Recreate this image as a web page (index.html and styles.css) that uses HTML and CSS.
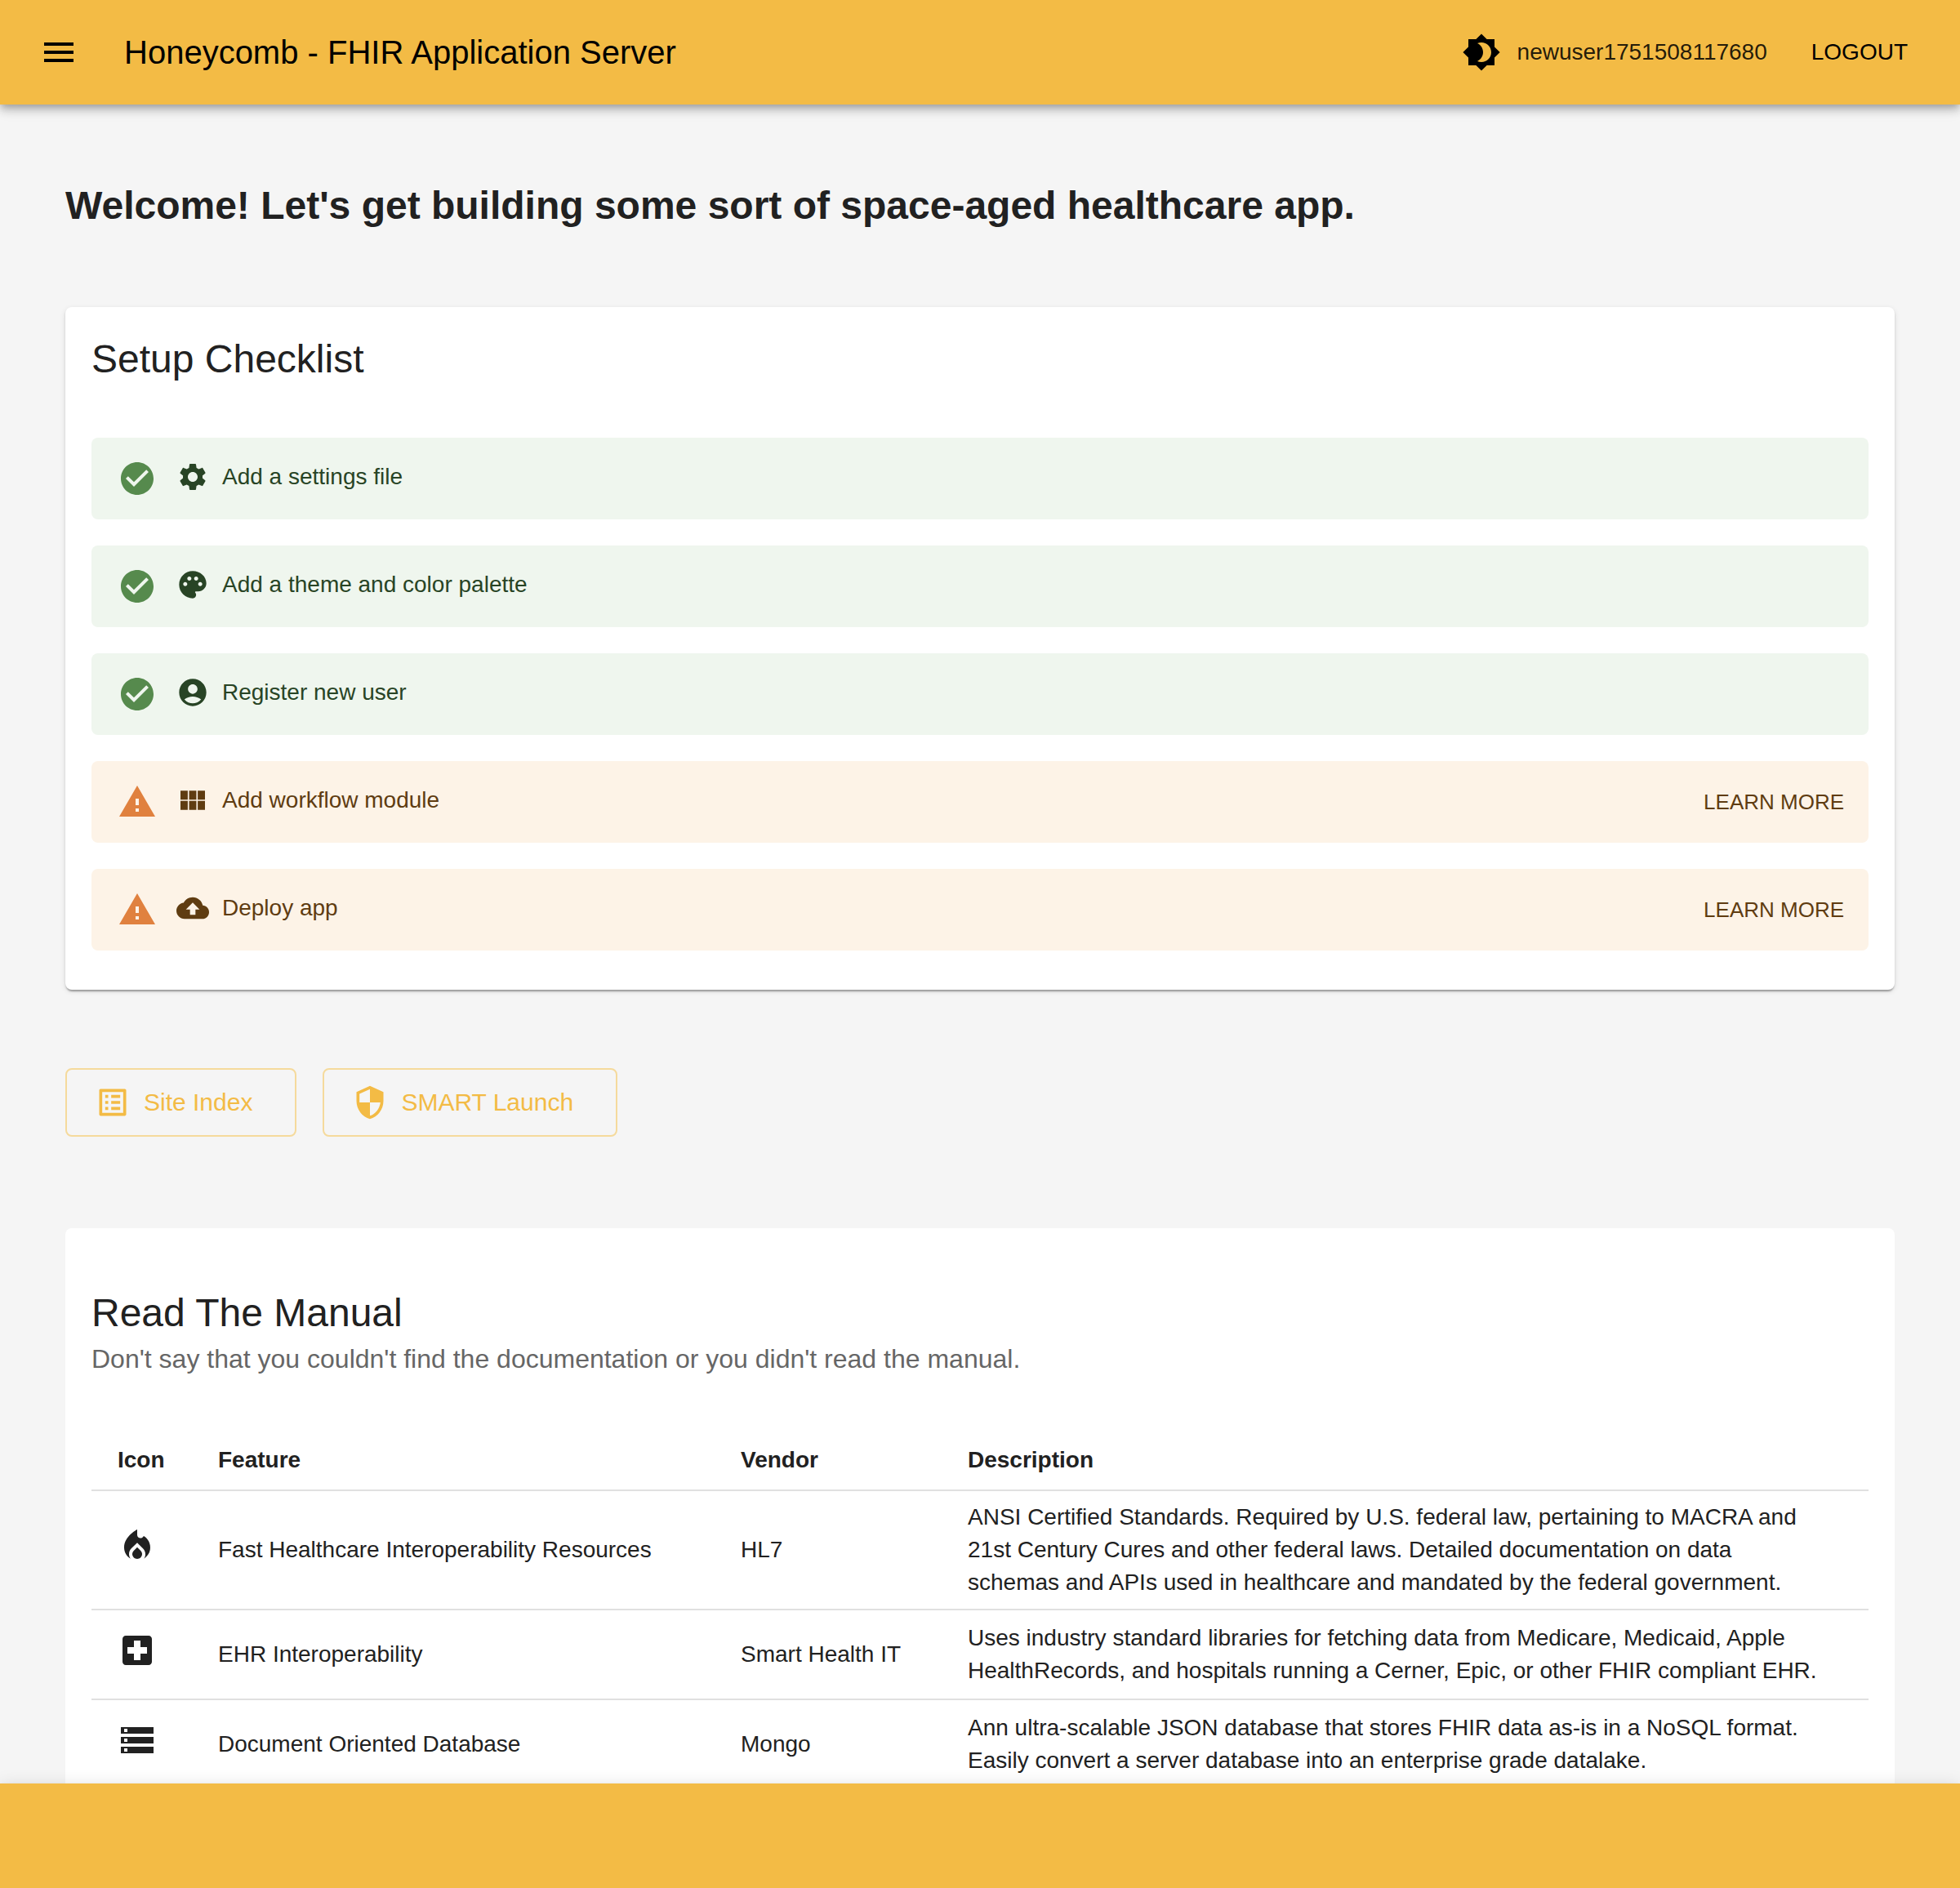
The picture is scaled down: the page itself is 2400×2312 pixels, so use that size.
FILE: index.html
```html
<!DOCTYPE html>
<html lang="en">
<head>
<meta charset="utf-8">
<meta name="viewport" content="width=device-width, initial-scale=1">
<title>Honeycomb - FHIR Application Server</title>
<link rel="stylesheet" href="styles.css">
</head>
<body>
<div class="app">
  <header class="app-bar">
    <button class="icon-button" type="button" aria-label="Menu">
      <svg class="icon icon-lg" viewBox="0 0 24 24"><path d="M3 18h18v-2H3v2zm0-5h18v-2H3v2zm0-7v2h18V6H3z"/></svg>
    </button>
    <div class="app-title">Honeycomb - FHIR Application Server</div>
    <div class="account">
      <button class="icon-button" type="button" aria-label="Toggle theme">
        <svg class="icon icon-lg" viewBox="0 0 24 24"><path d="M20 8.69V4h-4.69L12 .69 8.69 4H4v4.69L.69 12 4 15.31V20h4.69L12 23.31 15.31 20H20v-4.69L23.31 12 20 8.69zM12 18c-.89 0-1.74-.2-2.5-.55C11.56 16.5 13 14.42 13 12s-1.44-4.5-3.5-5.45C10.26 6.2 11.11 6 12 6c3.31 0 6 2.69 6 6s-2.69 6-6 6z"/></svg>
      </button>
      <span class="username">newuser1751508117680</span>
      <button class="logout" type="button">LOGOUT</button>
    </div>
  </header>

  <main class="content">
    <h1 class="welcome">Welcome! Let's get building some sort of space-aged healthcare app.</h1>

    <section class="card card-raised">
      <h2 class="card-title">Setup Checklist</h2>
      <ul class="checklist">
        <li class="alert alert-success">
          <svg class="icon icon-lg status" viewBox="0 0 24 24"><path d="M12 2C6.48 2 2 6.48 2 12s4.48 10 10 10 10-4.48 10-10S17.52 2 12 2zm-2 15l-5-5 1.41-1.41L10 14.17l7.59-7.59L19 8l-9 9z"/></svg>
          <div class="message">
            <svg class="icon icon-sm" viewBox="0 0 24 24"><path d="M19.14 12.94c.04-.3.06-.61.06-.94 0-.32-.02-.64-.07-.94l2.03-1.58c.18-.14.23-.41.12-.61l-1.92-3.32c-.12-.22-.37-.29-.59-.22l-2.39.96c-.5-.38-1.03-.7-1.62-.94l-.36-2.54c-.04-.24-.24-.41-.48-.41h-3.84c-.24 0-.43.17-.47.41l-.36 2.54c-.59.24-1.13.57-1.62.94l-2.39-.96c-.22-.08-.47 0-.59.22L2.74 8.87c-.12.21-.08.47.12.61l2.03 1.58c-.05.3-.09.63-.09.94s.02.64.07.94l-2.03 1.58c-.18.14-.23.41-.12.61l1.92 3.32c.12.22.37.29.59.22l2.39-.96c.5.38 1.03.7 1.62.94l.36 2.54c.05.24.24.41.48.41h3.84c.24 0 .44-.17.47-.41l.36-2.54c.59-.24 1.13-.56 1.62-.94l2.39.96c.22.08.47 0 .59-.22l1.92-3.32c.12-.22.07-.47-.12-.61l-2.01-1.58zM12 15.6c-1.98 0-3.6-1.62-3.6-3.6s1.62-3.6 3.6-3.6 3.6 1.62 3.6 3.6-1.62 3.6-3.6 3.6z"/></svg>
            <span>Add a settings file</span>
          </div>
        </li>
        <li class="alert alert-success">
          <svg class="icon icon-lg status" viewBox="0 0 24 24"><path d="M12 2C6.48 2 2 6.48 2 12s4.48 10 10 10 10-4.48 10-10S17.52 2 12 2zm-2 15l-5-5 1.41-1.41L10 14.17l7.59-7.59L19 8l-9 9z"/></svg>
          <div class="message">
            <svg class="icon icon-sm" viewBox="0 0 24 24"><path d="M12 2C6.49 2 2 6.49 2 12s4.49 10 10 10c1.38 0 2.5-1.12 2.5-2.5 0-.61-.23-1.2-.64-1.67-.08-.1-.13-.21-.13-.33 0-.28.22-.5.5-.5H16c3.31 0 6-2.69 6-6 0-4.96-4.49-9-10-9zm5.5 11c-.83 0-1.5-.67-1.5-1.5s.67-1.5 1.5-1.5 1.5.67 1.5 1.5-.67 1.5-1.5 1.5zm-3-4c-.83 0-1.5-.67-1.5-1.5S13.67 6 14.5 6s1.5.67 1.5 1.5S15.33 9 14.5 9zM5 11.5c0-.83.67-1.5 1.5-1.5s1.5.67 1.5 1.5S7.33 13 6.5 13 5 12.33 5 11.5zm6-4c0 .83-.67 1.5-1.5 1.5S8 8.33 8 7.5 8.67 6 9.5 6s1.5.67 1.5 1.5z"/></svg>
            <span>Add a theme and color palette</span>
          </div>
        </li>
        <li class="alert alert-success">
          <svg class="icon icon-lg status" viewBox="0 0 24 24"><path d="M12 2C6.48 2 2 6.48 2 12s4.48 10 10 10 10-4.48 10-10S17.52 2 12 2zm-2 15l-5-5 1.41-1.41L10 14.17l7.59-7.59L19 8l-9 9z"/></svg>
          <div class="message">
            <svg class="icon icon-sm" viewBox="0 0 24 24"><path d="M12 2C6.48 2 2 6.48 2 12s4.48 10 10 10 10-4.48 10-10S17.52 2 12 2zm0 4c1.93 0 3.5 1.57 3.5 3.5S13.93 13 12 13s-3.5-1.57-3.5-3.5S10.07 6 12 6zm0 14c-2.03 0-4.43-.82-6.14-2.88C7.55 15.8 9.68 15 12 15s4.45.8 6.14 2.12C16.43 19.18 14.03 20 12 20z"/></svg>
            <span>Register new user</span>
          </div>
        </li>
        <li class="alert alert-warning">
          <svg class="icon icon-lg status" viewBox="0 0 24 24"><path d="M1 21h22L12 2 1 21zm12-3h-2v-2h2v2zm0-4h-2v-4h2v4z"/></svg>
          <div class="message">
            <svg class="icon icon-sm" viewBox="0 0 24 24"><path d="M14.67 5v6.5H9.33V5h5.34zm1 6.5H21V5h-5.33v6.5zm-1 7.5v-6.5H9.33V19h5.34zm1-6.5V19H21v-6.5h-5.33zm-7.34 0H3V19h5.33v-6.5zm0-1V5H3v6.5h5.33z"/></svg>
            <span>Add workflow module</span>
          </div>
          <button class="learn-more" type="button">LEARN MORE</button>
        </li>
        <li class="alert alert-warning">
          <svg class="icon icon-lg status" viewBox="0 0 24 24"><path d="M1 21h22L12 2 1 21zm12-3h-2v-2h2v2zm0-4h-2v-4h2v4z"/></svg>
          <div class="message">
            <svg class="icon icon-sm" viewBox="0 0 24 24"><path d="M19.35 10.04C18.67 6.59 15.64 4 12 4 9.11 4 6.6 5.64 5.35 8.04 2.34 8.36 0 10.91 0 14c0 3.31 2.69 6 6 6h13c2.76 0 5-2.24 5-5 0-2.64-2.05-4.78-4.65-4.96zM14 13v4h-4v-4H7l5-5 5 5h-3z"/></svg>
            <span>Deploy app</span>
          </div>
          <button class="learn-more" type="button">LEARN MORE</button>
        </li>
      </ul>
    </section>

    <nav class="actions" aria-label="Quick links">
      <button class="outlined" type="button">
        <svg class="icon icon-md" viewBox="0 0 24 24"><path d="M19 5v14H5V5h14m1.1-2H3.9c-.5 0-.9.4-.9.9v16.2c0 .4.4.9.9.9h16.2c.4 0 .9-.5.9-.9V3.9c0-.5-.5-.9-.9-.9zM11 7h6v2h-6V7zm0 4h6v2h-6v-2zm0 4h6v2h-6zM7 7h2v2H7zm0 4h2v2H7zm0 4h2v2H7z"/></svg>
        <span>Site Index</span>
      </button>
      <button class="outlined" type="button">
        <svg class="icon icon-md" viewBox="0 0 24 24"><path d="M12 1 3 5v6c0 5.55 3.84 10.74 9 12 5.16-1.26 9-6.45 9-12V5l-9-4zm0 10.99h7c-.53 4.12-3.28 7.79-7 8.94V12H5V6.3l7-3.11v8.8z"/></svg>
        <span>SMART Launch</span>
      </button>
    </nav>

    <section class="card manual">
      <h2 class="card-title">Read The Manual</h2>
      <p class="subheader">Don't say that you couldn't find the documentation or you didn't read the manual.</p>
      <table class="features">
        <colgroup><col class="col-icon"><col class="col-feature"><col class="col-vendor"><col></colgroup>
        <thead>
          <tr><th>Icon</th><th>Feature</th><th>Vendor</th><th>Description</th></tr>
        </thead>
        <tbody>
          <tr>
            <td><div class="feature-icon"><svg class="icon icon-lg" viewBox="0 0 24 24"><path d="m12 12.9-2.13 2.09c-.56.56-.87 1.29-.87 2.07C9 18.68 10.35 20 12 20s3-1.32 3-2.94c0-.78-.31-1.52-.87-2.07L12 12.9z"/><path d="m16 6-.44.55C14.38 8.02 12 7.19 12 5.3V2S4 6 4 13c0 2.92 1.56 5.47 3.89 6.86-.56-.79-.89-1.76-.89-2.8 0-1.32.52-2.56 1.47-3.5L12 10.1l3.53 3.47c.95.93 1.47 2.17 1.47 3.5 0 1.02-.31 1.96-.85 2.75 1.89-1.15 3.29-3.06 3.71-5.3.66-3.55-1.07-6.9-3.86-8.52z"/></svg></div></td>
            <td>Fast Healthcare Interoperability Resources</td>
            <td>HL7</td>
            <td>ANSI Certified Standards. Required by U.S. federal law, pertaining to MACRA and 21st Century Cures and other federal laws. Detailed documentation on data schemas and APIs used in healthcare and mandated by the federal government.</td>
          </tr>
          <tr>
            <td><div class="feature-icon"><svg class="icon icon-lg" viewBox="0 0 24 24"><path d="M19 3H5c-1.1 0-1.99.9-1.99 2L3 19c0 1.1.9 2 2 2h14c1.1 0 2-.9 2-2V5c0-1.1-.9-2-2-2zm-1 11h-4v4h-4v-4H6v-4h4V6h4v4h4v4z"/></svg></div></td>
            <td>EHR Interoperability</td>
            <td>Smart Health IT</td>
            <td>Uses industry standard libraries for fetching data from Medicare, Medicaid, Apple HealthRecords, and hospitals running a Cerner, Epic, or other FHIR compliant EHR.</td>
          </tr>
          <tr>
            <td><div class="feature-icon"><svg class="icon icon-lg" viewBox="0 0 24 24"><path d="M2 20h20v-4H2v4zm2-3h2v2H4v-2zM2 4v4h20V4H2zm4 3H4V5h2v2zm-4 7h20v-4H2v4zm2-3h2v2H4v-2z"/></svg></div></td>
            <td>Document Oriented Database</td>
            <td>Mongo</td>
            <td>Ann ultra-scalable JSON database that stores FHIR data as-is in a NoSQL format. Easily convert a server database into an enterprise grade datalake.</td>
          </tr>
        </tbody>
      </table>
    </section>
  </main>

  <footer class="bottom-bar"></footer>
</div>
</body>
</html>
```

FILE: styles.css
```css
:root {
  --primary: #f3bb45;
  --primary-faded: #f5da9c;
  --page: #f5f5f5;
  --text: #212121;
  --text-muted: #666666;
  --divider: #e0e0e0;
  --bar-shadow: 0 4px 8px -2px rgba(0, 0, 0, 0.2), 0 8px 10px 0 rgba(0, 0, 0, 0.14), 0 2px 20px 0 rgba(0, 0, 0, 0.12);
}

* {
  box-sizing: border-box;
}

body {
  margin: 0;
  background: var(--page);
  color: var(--text);
  font-family: "Liberation Sans", Helvetica, Arial, sans-serif;
  font-size: 28px;
  line-height: 40px;
}

button {
  margin: 0;
  padding: 0;
  border: 0;
  background: none;
  color: inherit;
  font: inherit;
  white-space: nowrap;
  cursor: pointer;
}

.icon {
  display: block;
  flex: none;
  fill: currentColor;
}

.icon-lg {
  width: 48px;
  height: 48px;
}

.icon-md {
  width: 44px;
  height: 44px;
}

.icon-sm {
  width: 40px;
  height: 40px;
}

.app {
  display: flex;
  flex-direction: column;
  height: 100vh;
}

/* Top bar */
.app-bar {
  position: relative;
  z-index: 1;
  display: flex;
  flex: none;
  align-items: center;
  min-height: 128px;
  padding: 0 48px;
  background: var(--primary);
  box-shadow: var(--bar-shadow);
  color: #000;
}

.app-title {
  flex: 1;
  margin-left: 56px;
  font-size: 40px;
  line-height: 64px;
}

.account {
  display: flex;
  align-items: center;
}

.username {
  margin: 0 38px 0 20px;
  color: rgba(0, 0, 0, 0.87);
}

.logout {
  padding: 12px 16px;
}

/* Scrolling page */
.content {
  flex: 1;
  min-height: 0;
  overflow-y: auto;
  padding: 92px 80px 128px;
  scrollbar-width: none;
}

.welcome {
  margin: 0 0 92px;
  font-size: 48px;
  line-height: 64px;
}

.card {
  padding: 32px 32px 48px;
  border-radius: 8px;
  background: #fff;
}

.card-raised {
  box-shadow: 0 4px 2px -2px rgba(0, 0, 0, 0.2), 0 2px 2px 0 rgba(0, 0, 0, 0.14), 0 2px 6px 0 rgba(0, 0, 0, 0.12);
}

.card-title {
  margin: 0;
  font-size: 48px;
  font-weight: 400;
  line-height: 64px;
}

/* Setup checklist */
.checklist {
  display: flex;
  flex-direction: column;
  gap: 32px;
  margin: 64px 0 0;
  padding: 0;
  list-style: none;
}

.alert {
  display: flex;
  align-items: center;
  gap: 24px;
  padding: 12px 16px 12px 32px;
  min-height: 100px;
  border-radius: 8px;
}

.message {
  display: flex;
  flex: 1;
  align-items: center;
  gap: 16px;
  padding-bottom: 4px;
}

.alert-success {
  background: #eff6ee;
  color: #284425;
}

.alert-success .status {
  color: #568a4d;
}

.alert-warning {
  background: #fdf3e7;
  color: #5f3c11;
}

.alert-warning .status {
  color: #e0813f;
}

.learn-more {
  padding: 8px 14px;
  font-size: 26px;
}

/* Quick links */
.actions {
  display: flex;
  flex-wrap: wrap;
  gap: 32px;
  margin: 96px 0 112px;
}

.outlined {
  display: flex;
  align-items: center;
  gap: 16px;
  min-height: 84px;
  padding: 0 52px 0 34px;
  border: 2px solid var(--primary-faded);
  border-radius: 8px;
  color: var(--primary);
  font-size: 30px;
}

/* Manual */
.manual {
  padding-top: 72px;
}

.subheader {
  margin: 0 0 64px;
  color: var(--text-muted);
  font-size: 32px;
  line-height: 48px;
}

.features {
  width: 100%;
  border-collapse: separate;
  border-spacing: 0;
  table-layout: fixed;
}

.col-icon {
  width: 123px;
}

.col-feature {
  width: 640px;
}

.col-vendor {
  width: 278px;
}

.features th,
.features td {
  padding: 12px 32px;
  border-bottom: 2px solid var(--divider);
  text-align: left;
  vertical-align: middle;
}

.features th {
  line-height: 48px;
}

.features td:last-child {
  padding-right: 56px;
}

.feature-icon {
  padding: 13px 0 23px;
}

/* Bottom bar */
.bottom-bar {
  position: relative;
  z-index: 1;
  flex: none;
  min-height: 128px;
  background: var(--primary);
  box-shadow: var(--bar-shadow);
}
```
